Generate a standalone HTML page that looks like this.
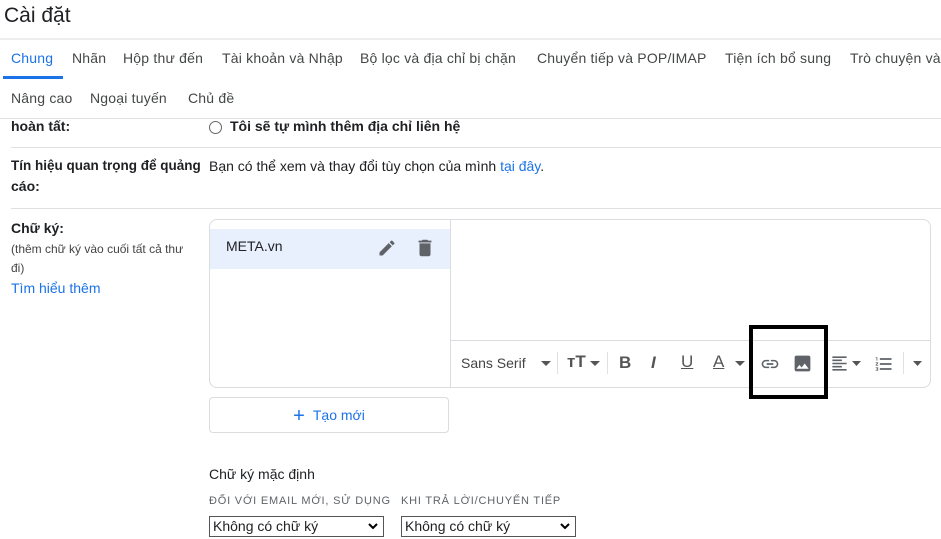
<!DOCTYPE html>
<html><head><meta charset="utf-8"><style>
body{margin:0;width:941px;height:539px;overflow:hidden;background:#fff;font-family:"Liberation Sans",Arial,sans-serif;color:#202124;position:relative}
.a{position:absolute;white-space:nowrap}
.tab{font-size:14px;color:#444746;top:50px;letter-spacing:.2px}
.t2{font-size:14px;color:#444746;top:90px;letter-spacing:.2px}
.b{font-weight:bold;font-size:14px;color:#202124}
.hl{position:absolute;height:1px;background:#e0e0e0}
</style></head><body>
<div class="a" style="left:4px;top:4px;font-size:21px;color:#202124">Cài đặt</div>
<div class="hl" style="left:0;top:38px;width:941px;height:2px;background:#eee"></div>
<div class="a tab" style="left:11px;color:#1a73e8">Chung</div>
<div class="a" style="left:3px;top:76px;width:60px;height:3px;background:#1a73e8"></div>
<div class="a tab" style="left:72px">Nhãn</div>
<div class="a tab" style="left:123px">Hộp thư đến</div>
<div class="a tab" style="left:222px">Tài khoản và Nhập</div>
<div class="a tab" style="left:360px">Bộ lọc và địa chỉ bị chặn</div>
<div class="a tab" style="left:537px">Chuyển tiếp và POP/IMAP</div>
<div class="a tab" style="left:725px">Tiện ích bổ sung</div>
<div class="a tab" style="left:850px">Trò chuyện và</div>
<div class="a t2" style="left:11px">Nâng cao</div>
<div class="a t2" style="left:90px">Ngoại tuyến</div>
<div class="a t2" style="left:188px">Chủ đề</div>
<div class="hl" style="left:0;top:118px;width:941px"></div>
<div class="a b" style="left:11px;top:118px">hoàn tất:</div>
<div class="a" style="left:209px;top:121px;width:11px;height:11px;border:1px solid #666;border-radius:50%"></div>
<div class="a b" style="left:230px;top:118px">Tôi sẽ tự mình thêm địa chỉ liên hệ</div>
<div class="hl" style="left:11px;top:147px;width:930px"></div>
<div class="a b" style="left:11px;top:158px;font-size:13.5px">Tín hiệu quan trọng để quảng</div>
<div class="a b" style="left:11px;top:178px">cáo:</div>
<div class="a" style="left:209px;top:158px;font-size:14px">Bạn có thể xem và thay đổi tùy chọn của mình <span style="color:#1a73e8">tại đây</span>.</div>
<div class="hl" style="left:11px;top:208px;width:930px"></div>
<div class="a b" style="left:11px;top:220px">Chữ ký:</div>
<div class="a" style="left:11px;top:242px;font-size:12px;color:#444">(thêm chữ ký vào cuối tất cả thư</div>
<div class="a" style="left:11px;top:261px;font-size:12px;color:#444">đi)</div>
<div class="a" style="left:11px;top:280px;font-size:14px;color:#1a73e8">Tìm hiểu thêm</div>
<div class="a" style="left:209px;top:219px;width:720px;height:167px;border:1px solid #dadce0;border-radius:8px;overflow:hidden">
 <div class="a" style="left:0;top:9px;width:241px;height:40px;background:#e8f0fe"></div>
 <div class="a" style="left:240px;top:0;width:1px;height:167px;background:#dadce0"></div>
 <div class="a" style="left:241px;top:120px;width:480px;height:1px;background:#dadce0"></div>
</div>
<div class="a" style="left:226px;top:238px;font-size:14px">META.vn</div>
<svg class="a" style="left:377px;top:238px" width="20" height="20" viewBox="0 0 24 24"><path fill="#5f6368" d="M3 17.25V21h3.75L17.8 9.94l-3.75-3.75L3 17.25zM20.7 7.04a1 1 0 000-1.41l-2.34-2.34a1 1 0 00-1.41 0l-1.83 1.83 3.75 3.75 1.83-1.83z"/></svg>
<svg class="a" style="left:414px;top:237px" width="22" height="22" viewBox="0 0 24 24"><path fill="#5f6368" d="M6 19c0 1.1.9 2 2 2h8c1.1 0 2-.9 2-2V7H6v12zM19 4h-3.5l-1-1h-5l-1 1H5v2h14V4z"/></svg>
<div class="a" style="left:461px;top:355px;font-size:14px;color:#444">Sans Serif</div>
<svg class="a" style="left:541px;top:361px" width="10" height="5"><path d="M0 0h10L5 5z" fill="#555"/></svg>
<div class="a" style="left:557px;top:352px;width:1px;height:22px;background:#e0e0e0"></div>
<div class="a" style="left:567px;top:352px;font-size:17px;font-weight:bold;color:#555">ᴛT</div>
<svg class="a" style="left:590px;top:361px" width="10" height="5"><path d="M0 0h10L5 5z" fill="#555"/></svg>
<div class="a" style="left:607px;top:352px;width:1px;height:22px;background:#e0e0e0"></div>
<div class="a" style="left:619px;top:353px;font-size:17px;font-weight:bold;color:#555">B</div>
<div class="a" style="left:651px;top:353px;font-size:17px;font-weight:bold;font-style:italic;color:#555">I</div>
<div class="a" style="left:681px;top:352px;font-size:17px;text-decoration:underline;color:#555">U</div>
<div class="a" style="left:713px;top:352px;font-size:17px;text-decoration:underline;color:#555">A</div>
<svg class="a" style="left:735px;top:361px" width="10" height="5"><path d="M0 0h10L5 5z" fill="#555"/></svg>
<svg class="a" style="left:760px;top:354px" width="20" height="20" viewBox="0 0 24 24"><path fill="#5f6368" d="M3.9 12c0-1.71 1.39-3.1 3.1-3.1h4V7H7c-2.76 0-5 2.24-5 5s2.24 5 5 5h4v-1.9H7c-1.71 0-3.1-1.39-3.1-3.1zM8 13h8v-2H8v2zm9-6h-4v1.9h4c1.71 0 3.1 1.39 3.1 3.1s-1.39 3.1-3.1 3.1h-4V17h4c2.76 0 5-2.24 5-5s-2.24-5-5-5z"/></svg>
<svg class="a" style="left:792px;top:353px" width="21" height="21" viewBox="0 0 24 24"><path fill="#5f6368" d="M21 19V5c0-1.1-.9-2-2-2H5c-1.1 0-2 .9-2 2v14c0 1.1.9 2 2 2h14c1.1 0 2-.9 2-2zM8.5 13.5l2.5 3 3.5-4.5 4.5 6H5l3.5-4.5z"/></svg>
<div class="a" style="left:749px;top:325px;width:71px;height:66px;border:4px solid #000"></div>
<svg class="a" style="left:830px;top:354px" width="19" height="19" viewBox="0 0 24 24"><path fill="#5f6368" d="M3 3h18v2H3zm0 4h12v2H3zm0 4h18v2H3zm0 4h12v2H3zm0 4h18v2H3z"/></svg>
<svg class="a" style="left:852px;top:361px" width="9" height="5"><path d="M0 0h9L4.5 5z" fill="#555"/></svg>
<svg class="a" style="left:874px;top:354px" width="20" height="20" viewBox="0 0 24 24"><path fill="#5f6368" d="M2 17h2v.5H3v1h1v.5H2v1h3v-4H2v1zm1-9h1V4H2v1h1v3zm-1 3h1.8L2 13.1v.9h3v-1H3.2L5 10.9V10H2v1zm5-6v2h14V5H7zm0 14h14v-2H7v2zm0-6h14v-2H7v2z"/></svg>
<div class="a" style="left:903px;top:352px;width:1px;height:22px;background:#e0e0e0"></div>
<svg class="a" style="left:913px;top:361px" width="9" height="5"><path d="M0 0h9L4.5 5z" fill="#555"/></svg>
<div class="a" style="left:209px;top:397px;width:238px;height:34px;border:1px solid #dadce0;border-radius:4px;text-align:center;line-height:34px;font-size:14px;color:#1a73e8"><span style="font-size:20px;vertical-align:-2px;margin-right:8px">+</span>Tạo mới</div>
<div class="a" style="left:209px;top:466px;font-size:14px">Chữ ký mặc định</div>
<div class="a" style="left:209px;top:495px;font-size:11px;color:#5f6368;letter-spacing:.8px">ĐỐI VỚI EMAIL MỚI, SỬ DỤNG</div>
<div class="a" style="left:401px;top:495px;font-size:11px;color:#5f6368;letter-spacing:.8px">KHI TRẢ LỜI/CHUYỂN TIẾP</div>
<div class="a" style="left:209px;top:516px;width:175px;height:21px;border:1px solid #555;font-size:14px;line-height:19px;padding-left:3px;box-sizing:border-box">Không có chữ ký<svg style="position:absolute;right:5px;top:6px" width="10" height="7"><path d="M1 1l4 4 4-4" stroke="#000" stroke-width="2" fill="none"/></svg></div>
<div class="a" style="left:401px;top:516px;width:175px;height:21px;border:1px solid #555;font-size:14px;line-height:19px;padding-left:3px;box-sizing:border-box">Không có chữ ký<svg style="position:absolute;right:5px;top:6px" width="10" height="7"><path d="M1 1l4 4 4-4" stroke="#000" stroke-width="2" fill="none"/></svg></div>
</body></html>
